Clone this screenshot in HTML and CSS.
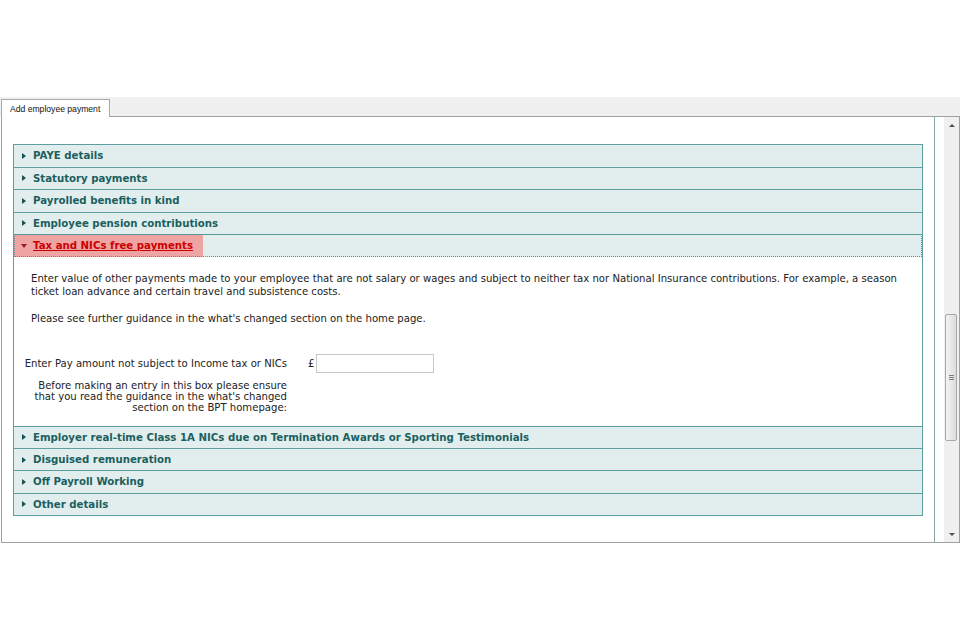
FILE: index.html
```html
<!DOCTYPE html>
<html>
<head>
<meta charset="utf-8">
<link rel="stylesheet" href="styles.css">
</head>
<body>
<div class="page">
  <div class="tabstrip">
    <div class="tab">Add employee payment</div>
  </div>
  <div class="panel">
    <div class="main">
      <div class="accordion">
        <div class="row"><span class="tri"></span>PAYE details</div>
        <div class="row"><span class="tri"></span>Statutory payments</div>
        <div class="row"><span class="tri"></span>Payrolled benefits in kind</div>
        <div class="row"><span class="tri"></span>Employee pension contributions</div>
        <div class="row open"><span class="hl"><span class="tri down"></span><a class="open-link">Tax and NICs free payments</a></span></div>
        <div class="content">
          <p class="para">Enter value of other payments made to your employee that are not salary or wages and subject to neither tax nor National Insurance contributions. For example, a season ticket loan advance and certain travel and subsistence costs.</p>
          <p class="para">Please see further guidance in the what's changed section on the home page.</p>
          <div class="form">
            <div class="label">Enter Pay amount not subject to Income tax or NICs</div>
            <div class="field"><span class="pound">£</span><input class="input" type="text"></div>
            <div class="help">Before making an entry in this box please ensure<br>that you read the guidance in the what's changed<br>section on the BPT homepage:</div>
          </div>
        </div>
        <div class="row r2"><span class="tri"></span>Employer real-time Class 1A NICs due on Termination Awards or Sporting Testimonials</div>
        <div class="row r2"><span class="tri"></span>Disguised remuneration</div>
        <div class="row r2"><span class="tri"></span>Off Payroll Working</div>
        <div class="row r2"><span class="tri"></span>Other details</div>
      </div>
    </div>
    <div class="gutter"></div>
    <div class="scrollbar">
      <div class="sb-btn"><span class="arr-up"></span></div>
      <div class="sb-track">
        <div class="thumb" style="margin-top:181px"><span class="grip"></span></div>
      </div>
      <div class="sb-btn"><span class="arr-down"></span></div>
    </div>
  </div>
</div>
</body>
</html>
```

FILE: styles.css
```css
html, body {
  margin: 0;
  padding: 0;
  background: #ffffff;
}
.page {
  padding-top: 97px;
  font-family: "DejaVu Sans", Verdana, sans-serif;
}
.tabstrip {
  height: 19px;
  background: #f0f0f0;
  display: flex;
  align-items: flex-end;
  padding-left: 1px;
  box-sizing: border-box;
}
.tab {
  position: relative;
  z-index: 2;
  width: 109px;
  height: 18px;
  box-sizing: border-box;
  background: #ffffff;
  border: 1px solid #a9a9a9;
  border-bottom: none;
  margin-bottom: -1px;
  font-family: "Liberation Sans", Arial, sans-serif;
  font-size: 8.6px;
  color: #111;
  padding: 4px 0 0 8px;
  white-space: nowrap;
}
.panel {
  margin-left: 1px;
  width: 959px;
  height: 427px;
  box-sizing: border-box;
  border: 1px solid #a0a0a0;
  display: flex;
  background: #fff;
}
.main {
  width: 933px;
  box-sizing: border-box;
  border-right: 1px solid #86aaaa;
  padding: 27px 11px 0 11px;
}
.gutter {
  width: 9px;
}
.scrollbar {
  width: 15px;
  background: #f0f0f0;
  display: flex;
  flex-direction: column;
}
.sb-btn {
  height: 16px;
  display: flex;
  align-items: center;
  justify-content: center;
}
.arr-up {
  width: 0; height: 0;
  border-left: 3px solid transparent;
  border-right: 3px solid transparent;
  border-bottom: 3px solid #505050;
}
.arr-down {
  width: 0; height: 0;
  border-left: 3px solid transparent;
  border-right: 3px solid transparent;
  border-top: 3px solid #505050;
}
.sb-track {
  flex: 1;
}
.thumb {
  margin-left: 1px;
  width: 12px;
  height: 127px;
  box-sizing: border-box;
  border: 1px solid #a8a8a8;
  border-radius: 2px;
  background: linear-gradient(to right, #f4f4f4, #dcdcdc);
  display: flex;
  align-items: center;
  justify-content: center;
}
.grip {
  width: 5px;
  height: 5px;
  background: repeating-linear-gradient(to bottom, #7a7a7a 0 1px, transparent 1px 2px);
}
.accordion {
  width: 910px;
  box-sizing: border-box;
  border: 1px solid #5f9ea0;
  border-top: none;
}
.row {
  height: 22.5px;
  box-sizing: border-box;
  border-top: 1px solid #5f9ea0;
  background: #e2eeee;
  display: flex;
  align-items: center;
  padding-left: 8px;
  font-size: 10.2px;
  font-weight: bold;
  color: #1b5f5f;
  white-space: nowrap;
}
.row.r2 {
  height: 22.3px;
}
.tri {
  width: 0;
  height: 0;
  border-top: 3.5px solid transparent;
  border-bottom: 3.5px solid transparent;
  border-left: 4px solid #1b4f4f;
  margin-right: 7px;
}
.row.open {
  padding-left: 0;
  align-items: stretch;
  outline: 1px dotted #5f8f90;
  outline-offset: -1px;
}
.hl {
  display: flex;
  align-items: center;
  width: 189px;
  background: #efa4a4;
  padding-left: 7px;
  box-sizing: border-box;
}
.tri.down {
  border-left: 3px solid transparent;
  border-right: 3px solid transparent;
  border-top: 4px solid #a02020;
  border-bottom: none;
  margin-right: 6px;
}
.open-link {
  color: #cc0000;
  text-decoration: underline;
}
.content {
  height: 169.2px;
  box-sizing: border-box;
  padding: 15px 10px 0 3px;
  font-size: 10.1px;
  color: #222;
  background: #fff;
}
.para {
  margin: 0 0 14px 14px;
  line-height: 13px;
}
.form {
  display: grid;
  grid-template-columns: 270px auto;
  column-gap: 21px;
  margin-top: 29px;
  align-items: center;
}
.label {
  text-align: right;
  white-space: nowrap;
}
.field {
  display: flex;
  align-items: center;
  gap: 2px;
}
.input {
  width: 118px;
  height: 19px;
  box-sizing: border-box;
  border: 1px solid #c8c8c8;
  margin: 0;
  padding: 0;
}
.help {
  text-align: right;
  line-height: 11.3px;
  margin-top: 7px;
  white-space: nowrap;
}
```
